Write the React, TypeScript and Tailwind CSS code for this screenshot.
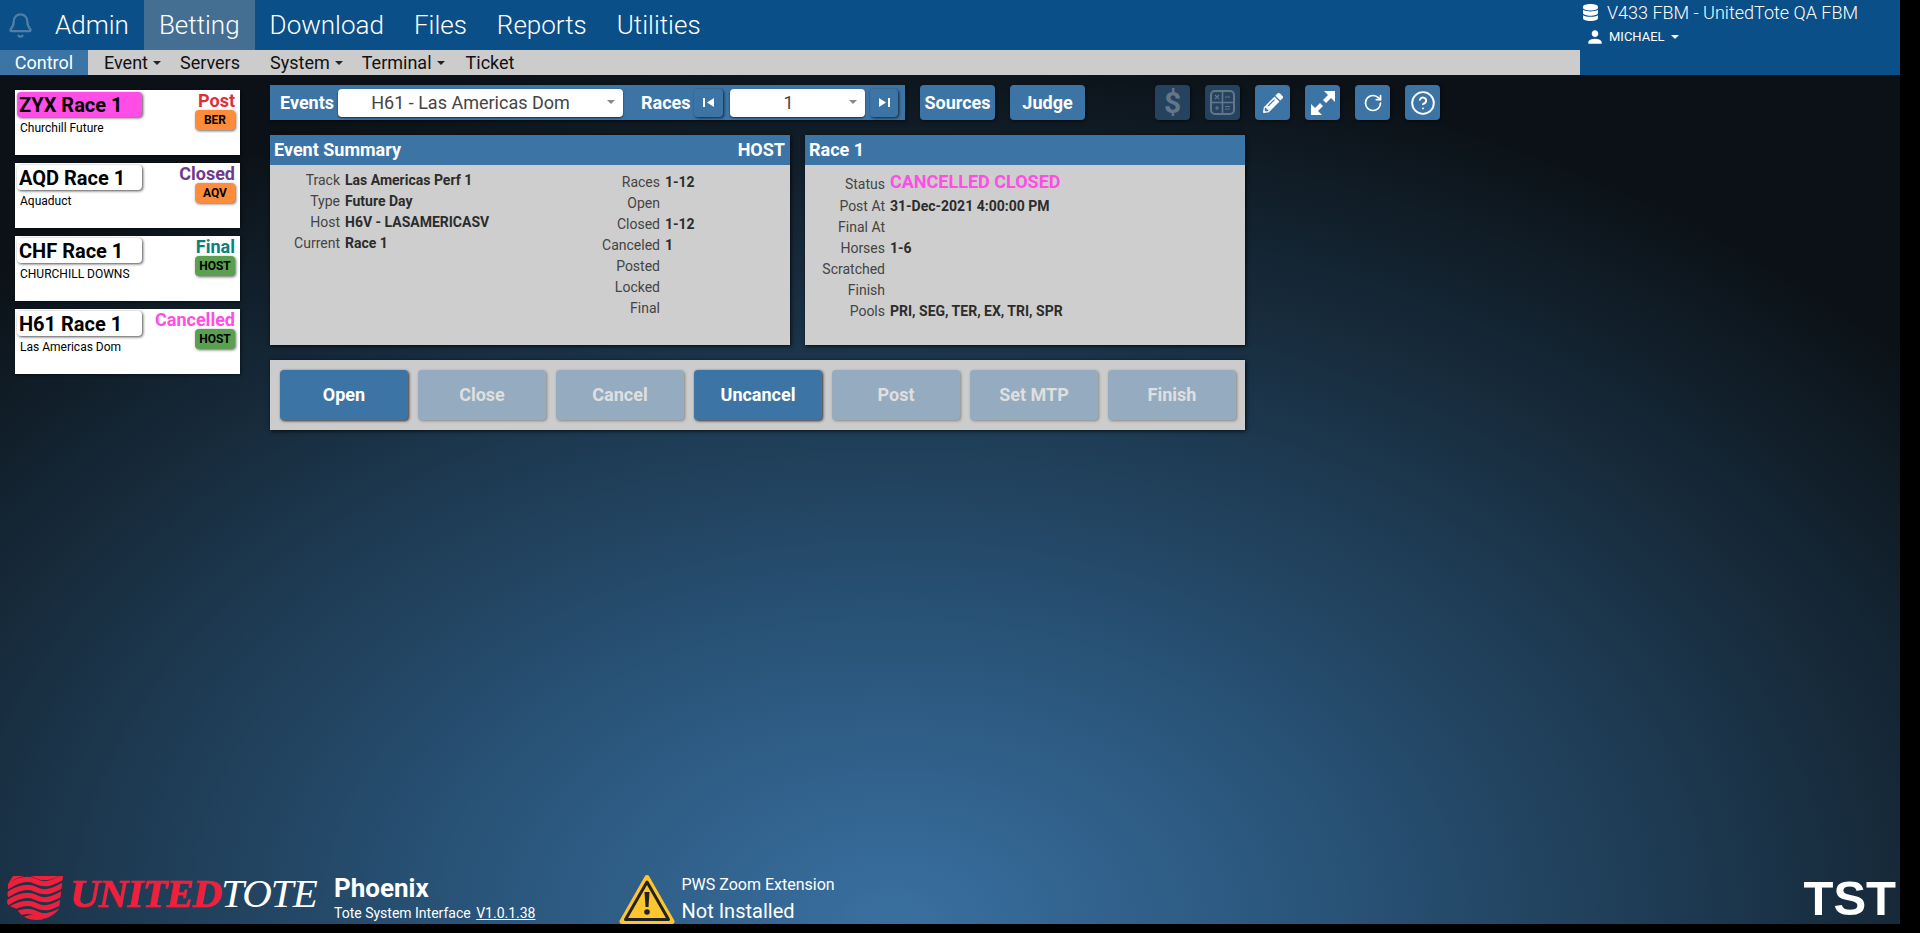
import { Bell, CircleHelp, RotateCw } from "lucide-react";
import { FaDatabase, FaPencilAlt } from "react-icons/fa";
import { MdPerson } from "react-icons/md";

const cards = [
  { title: "ZYX Race 1", sub: "Churchill Future", status: "Post", statusCls: "text-[#dc2f3c]", badge: "BER", badgeCls: "bg-[#ff8c3a]", pill: "bg-[#ff4de6]" },
  { title: "AQD Race 1", sub: "Aquaduct", status: "Closed", statusCls: "text-[#6f3a8c]", badge: "AQV", badgeCls: "bg-[#ff8c3a]", pill: "bg-white" },
  { title: "CHF Race 1", sub: "CHURCHILL DOWNS", status: "Final", statusCls: "text-[#0b8080]", badge: "HOST", badgeCls: "bg-[#5aa050]", pill: "bg-white" },
  { title: "H61 Race 1", sub: "Las Americas Dom", status: "Cancelled", statusCls: "text-[#ff4de6]", badge: "HOST", badgeCls: "bg-[#5aa050]", pill: "bg-white" },
];

const eventLeft = [
  ["Track", "Las Americas Perf 1"],
  ["Type", "Future Day"],
  ["Host", "H6V - LASAMERICASV"],
  ["Current", "Race 1"],
];

const eventRight = [
  ["Races", "1-12"],
  ["Open", ""],
  ["Closed", "1-12"],
  ["Canceled", "1"],
  ["Posted", ""],
  ["Locked", ""],
  ["Final", ""],
];

const raceRows = [
  ["Post At", "31-Dec-2021 4:00:00 PM"],
  ["Final At", ""],
  ["Horses", "1-6"],
  ["Scratched", ""],
  ["Finish", ""],
  ["Pools", "PRI, SEG, TER, EX, TRI, SPR"],
];

const actions = [
  { label: "Open", on: true },
  { label: "Close", on: false },
  { label: "Cancel", on: false },
  { label: "Uncancel", on: true },
  { label: "Post", on: false },
  { label: "Set MTP", on: false },
  { label: "Finish", on: false },
];

const Caret = ({ cls }: { cls: string }) => (
  <span className={`inline-block w-0 h-0 border-x-[4px] border-x-transparent border-t-[4px] ${cls}`} />
);

const Row = ({ label, value, labelW }: { label: string; value: string; labelW: string }) => (
  <div className="flex h-[21px] items-center text-[14px]">
    <span className={`${labelW} text-right text-[#444]`}>{label}</span>
    <span className="ml-[5px] font-bold text-[#2c2c2c]">{value}</span>
  </div>
);

const SelectBox = ({ text, cls }: { text: string; cls: string }) => (
  <div className={`relative flex h-[28px] items-center justify-center rounded-[4px] bg-white text-[18px] text-[#444] shadow-[0_1px_2px_rgba(0,0,0,0.6)] ${cls}`}>
    {text}
    <span className="absolute right-[8px] top-[11px] flex">
      <Caret cls="border-t-[#888]" />
    </span>
  </div>
);

const IconBtn = ({ children, off }: { children: React.ReactNode; off?: boolean }) => (
  <div className={`flex h-[35px] w-[35px] items-center justify-center rounded-[4px] shadow-[1px_1px_3px_rgba(0,0,0,0.6)] ${off ? "bg-[#25435f] text-[#63778a]" : "bg-[#3c75a5] text-white"}`}>
    {children}
  </div>
);

const StepBtn = ({ next, cls }: { next?: boolean; cls: string }) => (
  <div className={`flex h-[28px] items-center justify-center rounded-[4px] bg-[#3c75a5] shadow-[1px_1px_3px_rgba(0,0,0,0.7)] ${cls}`}>
    <svg width="11" height="9" viewBox="0 0 11 9" fill="white">
      <path d={next ? "M0 0L7 4.500L0 9ZM9 0H11V9H9Z" : "M0 0H2V9H0ZM11 0V9L4 4.500Z"} />
    </svg>
  </div>
);

const Logo = () => (
  <div className="flex items-center">
    <svg width="56" height="45" viewBox="0 0 56 45" className="ml-[1px] mr-[7px] shrink-0">
      <defs>
        <clipPath id="flag">
          <path d="M6 1H56L52 34C46 42 36 45 30 45C22 45 14 42 10 34L0 30L1 9Z" />
        </clipPath>
      </defs>
      <g clipPath="url(#flag)" fill="none" stroke="#f0203c" strokeWidth="5.2">
        <path d="M0 5C12 -3 22 -5 30 0C38 4 46 1 58 -6" strokeWidth="7" />
        <path d="M0 12C12 4 22 2 30 7C38 11 46 8 58 1" />
        <path d="M0 20C12 12 22 10 30 15C38 19 46 16 58 9" />
        <path d="M0 28C12 20 22 18 30 23C38 27 46 24 58 17" />
        <path d="M0 36C12 28 22 26 30 31C38 35 46 32 58 25" />
        <path d="M0 44C12 36 22 34 30 39C38 43 46 40 58 33" />
        <path d="M8 52C18 44 24 42 32 46C40 50 46 46 58 41" strokeWidth="8" />
      </g>
    </svg>
    <span className="mb-[7px] font-['Liberation_Serif',serif] text-[41px] italic leading-none tracking-[-1px]">
      <span className="font-bold text-[#f0203c] [-webkit-text-stroke:0.6px_#f0203c]">UNITED</span>
      <span className="text-white">TOTE</span>
    </span>
  </div>
);

export default function App() {
  return (
    <div className="h-[933px] w-full overflow-hidden bg-black font-['Roboto',sans-serif]">
      <div className="flex h-[924px] w-[1900px] flex-col">
        <div className="flex h-[75px] shrink-0 bg-[#0a4f87]">
          <div className="flex w-[1580px] flex-col">
            <div className="flex h-[50px] items-center text-[26px] font-light text-white">
              <Bell size={27} strokeWidth={2} className="ml-[7px] mr-[6px] text-[#4f7fa8]" />
              <span className="flex h-full items-center px-[15px]">Admin</span>
              <span className="flex h-full items-center bg-[#456f92] px-[15px]">Betting</span>
              <span className="flex h-full items-center px-[15px]">Download</span>
              <span className="flex h-full items-center px-[15px]">Files</span>
              <span className="flex h-full items-center px-[15px]">Reports</span>
              <span className="flex h-full items-center px-[15px]">Utilities</span>
            </div>
            <div className="flex h-[25px] items-center bg-[#cccccc] text-[18px] text-[#111]">
              <span className="flex h-full w-[88px] items-center justify-center bg-[#3c75a5] text-white">Control</span>
              <span className="ml-[16px] flex items-center gap-[5px]">Event <Caret cls="border-t-[#222]" /></span>
              <span className="ml-[19px]">Servers</span>
              <span className="ml-[30px] flex items-center gap-[5px]">System <Caret cls="border-t-[#222]" /></span>
              <span className="ml-[19px] flex items-center gap-[5px]">Terminal <Caret cls="border-t-[#222]" /></span>
              <span className="ml-[21px]">Ticket</span>
            </div>
          </div>
          <div className="pl-[2px] text-white">
            <div className="mt-[2px] flex h-[21px] items-center">
              <FaDatabase size={17} />
              <span className="ml-[8px] text-[18px] font-light">V433 FBM - UnitedTote QA FBM</span>
            </div>
            <div className="mt-[4px] flex h-[20px] items-center text-[13px]">
              <MdPerson size={20} className="ml-[3px]" />
              <span className="ml-[4px]">MICHAEL</span>
              <span className="ml-[6px] flex"><Caret cls="border-t-white" /></span>
            </div>
          </div>
        </div>

        <div className="flex min-h-0 flex-1 flex-col bg-[radial-gradient(ellipse_70%_105%_at_47%_100%,#3a70a0_0%,#2a567c_30%,#1b3449_65%,#0b1116_100%)]">
          <div className="flex flex-1 pt-[15px]">
            <div className="ml-[15px] flex w-[225px] flex-col gap-[8px]">
              {cards.map((c) => (
                <div key={c.title} className="relative h-[65px] bg-white pl-[2px] pt-[2px] shadow-[1px_1px_3px_rgba(0,0,0,0.5)]">
                  <div className={`flex h-[25px] w-[125px] items-center rounded-[4px] pl-[2px] text-[20px] font-bold text-black shadow-[1px_1px_3px_rgba(0,0,0,0.7)] ${c.pill}`}>
                    {c.title}
                  </div>
                  <div className="mt-[2px] pl-[3px] text-[12px] text-black">{c.sub}</div>
                  <div className="absolute right-[5px] top-0 flex flex-col items-end">
                    <span className={`pt-[1px] text-[18px] font-bold leading-[19px] ${c.statusCls}`}>{c.status}</span>
                    <span className={`flex h-[20px] w-[40px] items-center justify-center rounded-[4px] text-[12px] font-bold text-black shadow-[1px_1px_3px_rgba(0,0,0,0.6)] ${c.badgeCls}`}>
                      {c.badge}
                    </span>
                  </div>
                </div>
              ))}
            </div>

            <div className="ml-[30px] -mt-[5px] flex flex-col">
              <div className="flex items-center">
                <div className="flex h-[35px] w-[635px] items-center bg-[#3c75a5] text-[18px] font-bold text-white shadow-[1px_1px_3px_rgba(0,0,0,0.6)]">
                  <span className="ml-[10px] w-[58px]">Events</span>
                  <SelectBox text="H61 - Las Americas Dom" cls="w-[285px] pr-[20px] font-normal" />
                  <span className="ml-[18px] w-[53px]">Races</span>
                  <StepBtn cls="w-[29px]" />
                  <SelectBox text="1" cls="ml-[7px] w-[135px] pr-[18px] font-normal" />
                  <StepBtn next cls="ml-[5px] w-[28px]" />
                </div>
                <div className="ml-[15px] flex h-[35px] w-[75px] items-center justify-center rounded-[4px] bg-[#3c75a5] text-[18px] font-bold text-white shadow-[1px_1px_3px_rgba(0,0,0,0.6)]">Sources</div>
                <div className="ml-[15px] flex h-[35px] w-[75px] items-center justify-center rounded-[4px] bg-[#3c75a5] text-[18px] font-bold text-white shadow-[1px_1px_3px_rgba(0,0,0,0.6)]">Judge</div>
                <div className="ml-[70px] flex gap-[15px]">
                  <IconBtn off>
                    <span className="text-[30px] font-bold leading-none">$</span>
                  </IconBtn>
                  <IconBtn off>
                    <svg width="25" height="25" viewBox="0 0 25 25" fill="none" stroke="currentColor">
                      <rect x="1" y="1" width="23" height="23" rx="4" strokeWidth="2" />
                      <path d="M12.5 1V24M1 12.5H24" strokeWidth="1.6" />
                      <path d="M5 5L9 9M9 5L5 9M15 7H20M5 18H9M7 16V20M15 16.5H20M15 19H20" strokeWidth="1.2" />
                    </svg>
                  </IconBtn>
                  <IconBtn>
                    <FaPencilAlt size={20} />
                  </IconBtn>
                  <IconBtn>
                    <svg width="26" height="26" viewBox="0 0 26 26" fill="currentColor">
                      <path d="M14 1H25V12L21 8L16 13L13 10L18 5Z" />
                      <path d="M12 25H1V14L5 18L10 13L13 16L8 21Z" />
                    </svg>
                  </IconBtn>
                  <IconBtn>
                    <RotateCw size={20} strokeWidth={2} />
                  </IconBtn>
                  <IconBtn>
                    <CircleHelp size={26} strokeWidth={1.75} />
                  </IconBtn>
                </div>
              </div>

              <div className="mt-[15px] flex gap-[15px]">
                <div className="h-[210px] w-[520px] bg-[#cecece] shadow-[1px_1px_4px_rgba(0,0,0,0.8)]">
                  <div className="flex h-[30px] items-center justify-between bg-[#3c75a5] pb-[1px] pl-[4px] pr-[5px] text-[18px] font-bold text-white">
                    <span>Event Summary</span>
                    <span>HOST</span>
                  </div>
                  <div className="flex pt-[5px]">
                    <div className="w-[300px]">
                      {eventLeft.map(([l, v]) => (
                        <Row key={l} label={l} value={v} labelW="w-[70px]" />
                      ))}
                    </div>
                    <div className="pt-[2px]">
                      {eventRight.map(([l, v]) => (
                        <Row key={l} label={l} value={v} labelW="w-[90px]" />
                      ))}
                    </div>
                  </div>
                </div>
                <div className="h-[210px] w-[440px] bg-[#cecece] shadow-[1px_1px_4px_rgba(0,0,0,0.8)]">
                  <div className="flex h-[30px] items-center bg-[#3c75a5] pb-[1px] pl-[4px] text-[18px] font-bold text-white">Race 1</div>
                  <div className="pt-[7px]">
                    <div className="flex h-[24px] items-center text-[14px]">
                      <span className="w-[80px] text-right text-[#444]">Status</span>
                      <span className="mb-[5px] ml-[5px] text-[18px] font-bold text-[#ff4de6]">CANCELLED CLOSED</span>
                    </div>
                    {raceRows.map(([l, v]) => (
                      <Row key={l} label={l} value={v} labelW="w-[80px]" />
                    ))}
                  </div>
                </div>
              </div>

              <div className="mt-[15px] flex h-[70px] w-[975px] items-center gap-[10px] bg-[#cccccc] pl-[10px] pr-[8px] shadow-[1px_1px_4px_rgba(0,0,0,0.8)]">
                {actions.map((a) => (
                  <div
                    key={a.label}
                    className={`flex h-[50px] w-[128px] shrink-0 items-center justify-center rounded-[4px] pb-[2px] text-[18px] font-bold ${a.on ? "bg-[#3c75a5] text-white shadow-[1px_1px_3px_rgba(0,0,0,0.8)]" : "bg-[#95abbf] text-[#dfdfdf] shadow-[1px_1px_3px_rgba(0,0,0,0.35)]"}`}
                  >
                    {a.label}
                  </div>
                ))}
              </div>
            </div>
          </div>

          <div className="flex h-[50px] shrink-0 items-end pl-[6px] text-white">
            <div className="mb-[3px] w-[323px]"><Logo /></div>
            <div className="ml-[5px] flex flex-col">
              <span className="text-[26px] font-bold leading-[28px]">Phoenix</span>
              <span className="text-[14px] leading-[22px]">
                Tote System Interface <span className="ml-[2px] underline">V1.0.1.38</span>
              </span>
            </div>
            <svg width="56" height="50" viewBox="0 0 56 50" className="ml-[83px] shrink-0">
              <path d="M28 3.500L53 47.500H3Z" fill="#fcc72e" stroke="#fcc72e" strokeWidth="5" strokeLinejoin="round" />
              <path d="M28 8L49.500 45.500H6.500Z" fill="#fcc72e" stroke="#222" strokeWidth="3" strokeLinejoin="round" />
              <path d="M25.500 18H30.500L29.500 33H26.500Z" fill="#222" />
              <circle cx="28" cy="38" r="2.800" fill="#222" />
            </svg>
            <div className="ml-[7px] flex flex-col">
              <span className="pb-[1px] text-[16px] leading-[24px]">PWS Zoom Extension</span>
              <span className="text-[20px] leading-[26px]">Not Installed</span>
            </div>
            <span className="ml-auto mb-[2px] pr-[4px] font-['Liberation_Sans',sans-serif] text-[49px] font-bold leading-[48px]">TST</span>
          </div>
        </div>
      </div>
    </div>
  );
}
